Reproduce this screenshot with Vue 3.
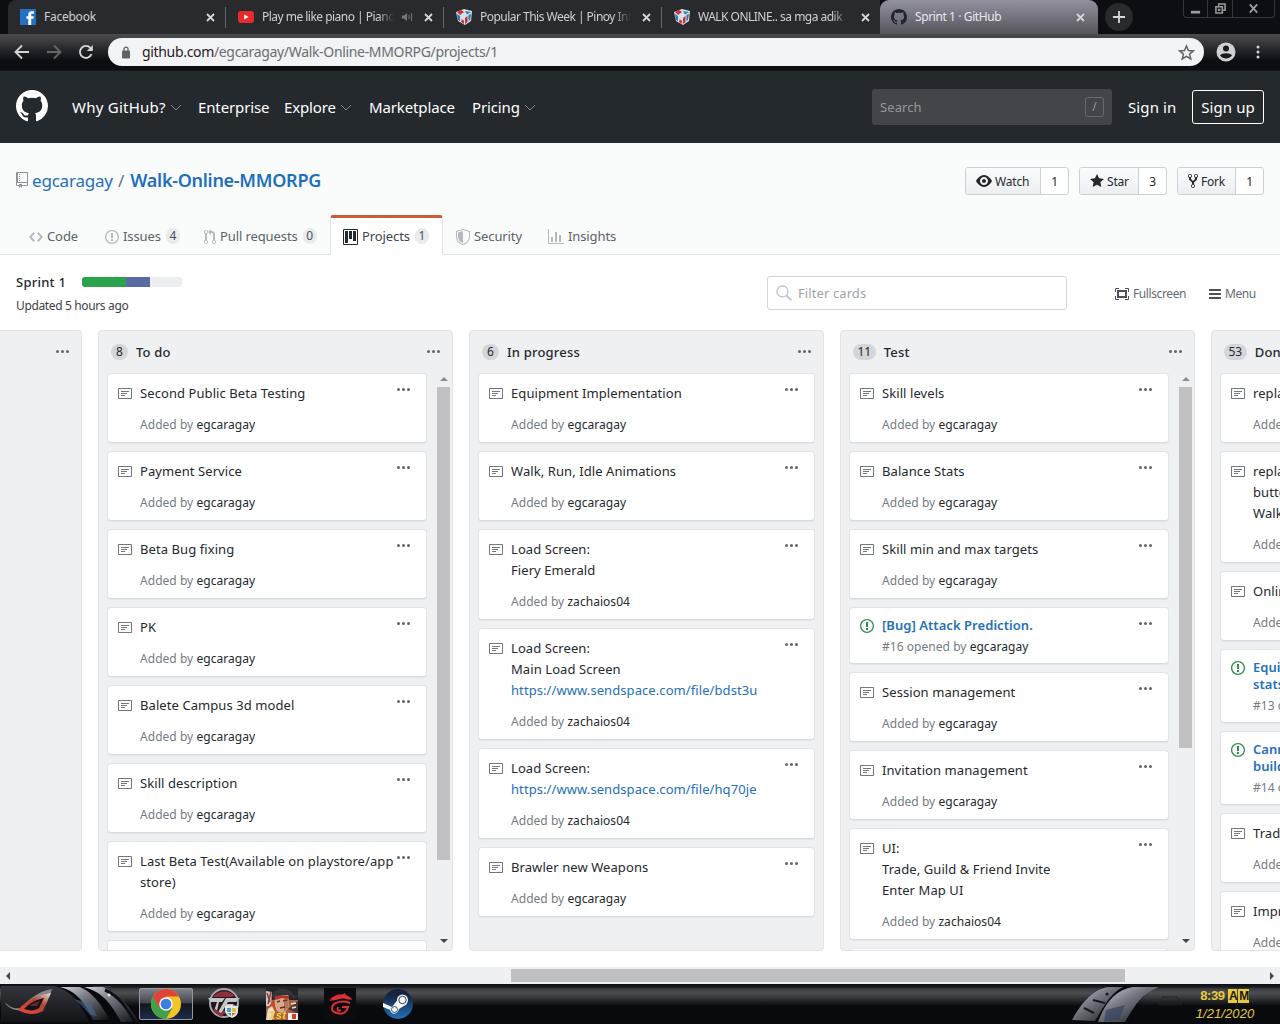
<script setup>
const icons = {
  github: [16, 'M8 0C3.58 0 0 3.58 0 8c0 3.54 2.29 6.53 5.47 7.59.4.07.55-.17.55-.38 0-.19-.01-.82-.01-1.49-2.01.37-2.53-.49-2.69-.94-.09-.23-.48-.94-.82-1.13-.28-.15-.68-.52-.01-.53.63-.01 1.08.58 1.23.82.72 1.21 1.87.87 2.33.66.07-.52.28-.87.51-1.07-1.78-.2-3.64-.89-3.64-3.95 0-.87.31-1.59.82-2.15-.08-.2-.36-1.02.08-2.12 0 0 .67-.21 2.2.82.64-.18 1.32-.27 2-.27.68 0 1.36.09 2 .27 1.53-1.04 2.2-.82 2.2-.82.44 1.1.16 1.92.08 2.12.51.56.82 1.27.82 2.15 0 3.07-1.87 3.75-3.65 3.95.29.25.54.73.54 1.48 0 1.07-.01 1.93-.01 2.2 0 .21.15.46.55.38A8.013 8.013 0 0 0 16 8c0-4.42-3.58-8-8-8z'],
  repo: [12, 'M4 9H3V8h1v1zm0-3H3v1h1V6zm0-2H3v1h1V4zm0-2H3v1h1V2zm8-1v12c0 .55-.45 1-1 1H6v2l-1.5-1.5L3 16v-2H1c-.55 0-1-.45-1-1V1c0-.55.45-1 1-1h10c.55 0 1 .45 1 1zm-1 10H1v2h2v-1h3v1h5v-2zm0-10H2v9h9V1z'],
  code: [14, 'M9.5 3L8 4.5 11.5 8 8 11.5 9.5 13 14 8 9.5 3zm-5 0L0 8l4.5 5L6 11.5 2.5 8 6 4.5 4.5 3z'],
  issue: [14, 'M7 2.3c3.14 0 5.7 2.56 5.7 5.7s-2.56 5.7-5.7 5.7A5.71 5.71 0 0 1 1.3 8c0-3.14 2.56-5.7 5.7-5.7zM7 1C3.14 1 0 4.14 0 8s3.14 7 7 7 7-3.14 7-7-3.14-7-7-7zm1 3H6v5h2V4zm0 6H6v2h2v-2z'],
  pull: [12, 'M11 11.28V5c-.03-.78-.34-1.47-.94-2.06C9.46 2.35 8.78 2.03 8 2H7V0L4 3l3 3V4h1c.27.02.48.11.69.31.21.2.3.42.31.69v6.28A1.993 1.993 0 0 0 10 15a1.993 1.993 0 0 0 1-3.72zm-1 2.92c-.66 0-1.2-.55-1.2-1.2 0-.65.55-1.2 1.2-1.2.65 0 1.2.55 1.2 1.2 0 .65-.55 1.2-1.2 1.2zM4 3c0-1.11-.89-2-2-2a1.993 1.993 0 0 0-1 3.72v6.56A1.993 1.993 0 0 0 2 15a1.993 1.993 0 0 0 1-3.72V4.72c.59-.34 1-.98 1-1.72zm-.8 10c0 .66-.55 1.2-1.2 1.2-.65 0-1.2-.55-1.2-1.2 0-.65.55-1.2 1.2-1.2.65 0 1.2.55 1.2 1.2zM2 4.2C1.34 4.2.8 3.65.8 3c0-.65.55-1.2 1.2-1.2.65 0 1.2.55 1.2 1.2 0 .65-.55 1.2-1.2 1.2z'],
  project: [15, 'M10 12h3V2h-3v10zm-4-2h3V2H6v8zm-4 4h3V2H2v12zm-1 1h13V1H1v14zM14 0H1a1 1 0 0 0-1 1v14a1 1 0 0 0 1 1h13a1 1 0 0 0 1-1V1a1 1 0 0 0-1-1z'],
  shield: [14, 'M0 2l7-2 7 2v6.02C14 12.69 8.69 16 7 16c-1.69 0-7-3.31-7-7.98V2zm1 .75L7 1l6 1.75v5.268C13 12.104 8.449 15 7 15c-1.449 0-6-2.896-6-6.982V2.75zm1 .75L7 2v12c-1.207 0-5-2.482-5-5.985V3.5z'],
  graph: [16, 'M16 14v1H0V0h1v14h15zM5 13H3V8h2v5zm4 0H7V3h2v10zm4 0h-2V6h2v7z'],
  eye: [16, 'M8.06 2C3 2 0 8 0 8s3 6 8.06 6C13 14 16 8 16 8s-3-6-7.94-6zM8 12c-2.2 0-4-1.78-4-4 0-2.2 1.8-4 4-4 2.22 0 4 1.8 4 4 0 2.22-1.78 4-4 4zm2-4c0 1.11-.89 2-2 2-1.11 0-2-.89-2-2 0-1.11.89-2 2-2 1.11 0 2 .89 2 2z'],
  star: [14, 'M14 6l-4.9-.64L7 1 4.9 5.36 0 6l3.6 3.26L2.67 14 7 11.67 11.33 14l-.93-4.74L14 6z'],
  fork: [10, 'M8 1a1.993 1.993 0 0 0-1 3.72V6L5 8 3 6V4.72A1.993 1.993 0 0 0 2 1a1.993 1.993 0 0 0-1 3.72V6.5l3 3v1.78A1.993 1.993 0 0 0 5 15a1.993 1.993 0 0 0 1-3.72V9.5l3-3V4.72A1.993 1.993 0 0 0 8 1zM2 4.2C1.34 4.2.8 3.65.8 3c0-.65.55-1.2 1.2-1.2.65 0 1.2.55 1.2 1.2 0 .65-.55 1.2-1.2 1.2zm3 10c-.66 0-1.2-.55-1.2-1.2 0-.65.55-1.2 1.2-1.2.65 0 1.2.55 1.2 1.2 0 .65-.55 1.2-1.2 1.2zm3-10c-.66 0-1.2-.55-1.2-1.2 0-.65.55-1.2 1.2-1.2.65 0 1.2.55 1.2 1.2 0 .65-.55 1.2-1.2 1.2z'],
  note: [14, 'M3 10h4V9H3v1zm0-2h6V7H3v1zm0-2h8V5H3v1zm10 6H1V3h12v9zM1 2c-.55 0-1 .45-1 1v9c0 .55.45 1 1 1h12c.55 0 1-.45 1-1V3c0-.55-.45-1-1-1H1z'],
  kebab: [13, 'M1.5 9a1.5 1.5 0 1 0 0-3 1.5 1.5 0 0 0 0 3zm5 0a1.5 1.5 0 1 0 0-3 1.5 1.5 0 0 0 0 3zM13 7.5a1.5 1.5 0 1 1-3 0 1.5 1.5 0 0 1 3 0z'],
  full: [14, 'M13 10h1v3c0 .547-.453 1-1 1h-3v-1h3v-3zM1 10H0v3c0 .547.453 1 1 1h3v-1H1v-3zm0-7h3V2H1c-.547 0-1 .453-1 1v3h1V3zm1 1h10v8H2V4zm2 6h6V6H4v4zm6-8v1h3v3h1V3c0-.547-.453-1-1-1h-3z'],
  bars: [12, 'M11.41 9H.59C0 9 0 8.59 0 8c0-.59 0-1 .59-1H11.4c.59 0 .59.41.59 1 0 .59 0 1-.59 1h.01zm0-4H.59C0 5 0 4.59 0 4c0-.59 0-1 .59-1H11.4c.59 0 .59.41.59 1 0 .59 0 1-.59 1h.01zM.59 11H11.4c.59 0 .59.41.59 1 0 .59 0 1-.59 1H.59C0 13 0 12.59 0 12c0-.59 0-1 .59-1z'],
}

const browserTabs = [
  { icon: 'fb', title: 'Facebook' },
  { icon: 'yt', title: 'Play me like piano | Piano', sound: true },
  { icon: 'cube', title: 'Popular This Week | Pinoy Inte' },
  { icon: 'cube', title: 'WALK ONLINE.. sa mga adik' },
  { icon: 'gh', title: 'Sprint 1 · GitHub', active: true },
]

const nav = [
  { label: 'Why GitHub?', caret: true, w: 126, wide: true },
  { label: 'Enterprise', w: 86 },
  { label: 'Explore', caret: true, w: 85 },
  { label: 'Marketplace', w: 103 },
  { label: 'Pricing', caret: true, w: 80 },
]

const repoTabs = [
  { icon: 'code', label: 'Code', w: 76 },
  { icon: 'issue', label: 'Issues', count: 4, w: 99 },
  { icon: 'pull', label: 'Pull requests', count: 0, w: 139 },
  { icon: 'project', label: 'Projects', count: 1, w: 113, active: true },
  { icon: 'shield', label: 'Security', w: 92 },
  { icon: 'graph', label: 'Insights', w: 90 },
]

const actions = [
  { icon: 'eye', label: 'Watch', count: 1, w: 75, total: 104 },
  { icon: 'star', label: 'Star', count: 3, w: 59, total: 88 },
  { icon: 'fork', label: 'Fork', count: 1, w: 58, total: 87 },
]

const note = (lines, by = 'egcaragay') => ({ lines: [].concat(lines), by })
const issue = (lines, num) => ({ lines, num, by: 'egcaragay' })

const columns = [
  { name: '', cards: [] },
  {
    name: 'To do', count: 8, thumb: 473,
    cards: [
      note('Second Public Beta Testing'), note('Payment Service'), note('Beta Bug fixing'), note('PK'),
      note('Balete Campus 3d model'), note('Skill description'),
      note(['Last Beta Test(Available on playstore/app', 'store)']), note('Website'),
    ],
  },
  {
    name: 'In progress', count: 6,
    cards: [
      note('Equipment Implementation'), note('Walk, Run, Idle Animations'),
      note(['Load Screen:', 'Fiery Emerald'], 'zachaios04'),
      note(['Load Screen:', 'Main Load Screen', 'https://www.sendspace.com/file/bdst3u'], 'zachaios04'),
      note(['Load Screen:', 'https://www.sendspace.com/file/hq70je'], 'zachaios04'),
      note('Brawler new Weapons'),
    ],
  },
  {
    name: 'Test', count: 11, thumb: 361,
    cards: [
      note('Skill levels'), note('Balance Stats'), note('Skill min and max targets'),
      issue(['[Bug] Attack Prediction.'], 16), note('Session management'), note('Invitation management'),
      note(['UI:', 'Trade, Guild & Friend Invite', 'Enter Map UI'], 'zachaios04'), note('Map'),
    ],
  },
  {
    name: 'Done', count: 53, thumb: 100,
    cards: [
      note('replace skill icons'), note(['replace login', 'button images', 'Walk Online']), note('Online status'),
      issue(['Equipment bonus', 'stats not applied'], 13), issue(['Cannot enter the', 'building'], 14),
      note('Trade system'), note('Improve lighting'),
    ],
  },
]
</script>

<template>
  <div class="screen">
    <div class="tabstrip">
      <div v-for="(t, i) in browserTabs" :key="i" class="btab" :class="{ active: t.active }">
        <svg v-if="t.icon === 'fb'" class="fav" viewBox="0 0 16 16"><rect width="16" height="16" fill="#2470c4" /><path d="M8.3 16V9.8H6.4V7.3h1.9V5.5C8.3 3.400 9.500 2.300 11.500 2.300H14v2.400h-1.500c-1 0-1.300.4-1.300 1.200v1.400h2.600l-.4 2.500h-2.200V16z" fill="#fff" /></svg>
        <svg v-else-if="t.icon === 'yt'" class="fav" viewBox="0 0 16 16"><rect x="0" y="2" width="16" height="12" rx="3" fill="#e62b2b" /><path d="M6.200 5.500v5L10.600 8z" fill="#fff" /></svg>
        <svg v-else-if="t.icon === 'cube'" class="fav" viewBox="0 0 16 16">
          <path d="M0 3L8 0l8 2-1 10-6 4-7-4z" fill="#d8dfe6" /><path d="M1 3l4-2 3 2-4 3z" fill="#c8362e" /><path d="M9 2l6 1-4 2.500z" fill="#2a7fc4" />
          <path d="M1 5l3 2v5l-2-1z" fill="#2874b8" /><path d="M5 8l3 1.500V15l-3-2z" fill="#d3d9df" /><path d="M5.500 10.500l2.500 1V15l-3-2z" fill="#c33d34" /><path d="M9 9l2.500-2v6L9 15z" fill="#b93632" /><path d="M12.500 6L15 5l-1 6-1.500 1z" fill="#2d6fa9" />
        </svg>
        <svg v-else class="fav" viewBox="0 0 16 16" fill="#1e2430"><path :d="icons.github[1]" /></svg>
        <span class="btitle" :class="{ fade: t.title.length > 20 }">{{ t.title }}</span>
        <svg v-if="t.sound" class="sound" viewBox="0 0 11 10" fill="none" stroke="#77777b"><path d="M0 3.500h2L5 1v8L2 6.500H0z" fill="#77777b" stroke="none" /><path d="M7 3v4M9.500 1v8" /></svg>
        <svg class="close" viewBox="0 0 9 9"><path d="M1 1l7 7M8 1L1 8" stroke="#d6d6da" stroke-width="1.800" /></svg>
      </div>
      <div class="newtab"><svg viewBox="0 0 12 12"><path d="M6 0v12M0 6h12" stroke="#d8d8dc" stroke-width="1.800" /></svg></div>
      <div class="winbtns">
        <span><svg viewBox="0 0 12 12"><path d="M1 10h10" stroke="#9b9ba0" stroke-width="3" /></svg></span>
        <span><svg viewBox="0 0 12 12" fill="none" stroke="#9b9ba0" stroke-width="1.700"><path d="M4 3V1h7v7H9M1 4h7v7H1zM4 7h1v1H4z" /></svg></span>
        <span class="wide"><svg viewBox="0 0 12 12"><path d="M2 1.500l8 9M10 1.500l-8 9" stroke="#9b9ba0" stroke-width="2" /></svg></span>
      </div>
    </div>

    <div class="toolbar">
      <svg class="navi" viewBox="0 0 16 16" fill="none" stroke="#d4d5d8" stroke-width="1.800"><path d="M15 8H2M8 1.500L1.500 8 8 14.500" /></svg>
      <svg class="navi" viewBox="0 0 16 16" fill="none" stroke="#66676a" stroke-width="1.800"><path d="M1 8h13M8 1.500L14.500 8 8 14.500" /></svg>
      <svg class="navi" viewBox="0 0 16 16" fill="none" stroke="#d4d5d8" stroke-width="1.900"><path d="M13.500 10.200A6 6 0 1 1 12.500 4L14 5.500" /><path d="M14.800 1v6h-6z" fill="#d4d5d8" stroke="none" /></svg>
      <div class="omni">
        <svg class="lock" viewBox="0 0 10 13"><rect x="1" y="4.500" width="8" height="8" rx="1" fill="#5f6368" /><path d="M3 5V3.200a2 2 0 0 1 4 0V5" fill="none" stroke="#5f6368" stroke-width="1.300" /></svg>
        <span class="url"><b>github.com</b>/egcaragay/Walk-Online-MMORPG/projects/1</span>
        <svg class="bstar" viewBox="0 0 16 16"><path d="M8 1.800l1.800 4.300 4.700.4-3.600 3 1.100 4.600L8 11.600l-4 2.500 1.100-4.600-3.600-3 4.700-.4z" fill="none" stroke="#5f6368" stroke-width="1.400" /></svg>
      </div>
      <svg class="user" viewBox="0 0 20 20"><circle cx="10" cy="10" r="9.500" fill="#d0d0d4" /><circle cx="10" cy="6.500" r="3" fill="#191b20" /><path d="M4 13.500c1.500-3 10.500-3 12 0-3 4-9 4-12 0z" fill="#191b20" /></svg>
      <svg class="dots" viewBox="0 0 4 14" fill="#d4d5d8"><circle cx="2" cy="2" r="1.500" /><circle cx="2" cy="7" r="1.500" /><circle cx="2" cy="12" r="1.500" /></svg>
    </div>

    <header class="ghead">
      <svg class="mark" viewBox="0 0 16 16" fill="#fff"><path :d="icons.github[1]" /></svg>
      <nav class="gnav">
        <a v-for="n in nav" :key="n.label" :class="{ loose: n.wide }" :style="{ width: n.w + 'px' }">{{ n.label }}<svg v-if="n.caret" viewBox="0 0 12 7"><path d="M1 1l5 5 5-5" fill="none" stroke="#84898d" /></svg></a>
      </nav>
      <div class="gsearch"><span>Search</span><kbd>/</kbd></div>
      <a class="signin">Sign in</a>
      <a class="signup">Sign up</a>
    </header>

    <section class="repohead">
      <div class="titlebar">
        <svg class="repoicon" viewBox="0 0 12 16"><path :d="icons.repo[1]" /></svg>
        <h1><a class="owner">egcaragay</a><i>/</i><a class="reponame">Walk-Online-MMORPG</a></h1>
        <div class="actions">
          <div v-for="a in actions" :key="a.label" class="action" :style="{ width: a.total + 'px' }">
            <span class="btn" :style="{ width: a.w + 'px' }"><svg :width="icons[a.icon][0]" height="16" :viewBox="`0 0 ${icons[a.icon][0]} 16`"><path :d="icons[a.icon][1]" /></svg>{{ a.label }}</span>
            <span class="cnt">{{ a.count }}</span>
          </div>
        </div>
      </div>
      <nav class="rtabs">
        <a v-for="r in repoTabs" :key="r.label" :class="{ active: r.active }" :style="{ width: r.w + 'px' }">
          <svg :width="icons[r.icon][0]" height="16" :viewBox="`0 0 ${icons[r.icon][0]} 16`"><path fill-rule="evenodd" :d="icons[r.icon][1]" /></svg>
          <span>{{ r.label }}</span><em v-if="r.count !== undefined">{{ r.count }}</em>
        </a>
      </nav>
    </section>

    <section class="projhead">
      <div class="pinfo">
        <div class="pname"><strong>Sprint 1</strong><span class="progress"><i class="g" /><i class="p" /></span></div>
        <div class="updated">Updated 5 hours ago</div>
      </div>
      <div class="filter"><svg viewBox="0 0 16 16" fill="none" stroke="#c2c5c9" stroke-width="1.300"><circle cx="6.500" cy="6.500" r="5.500" /><path d="M10.500 10.500l5 5" stroke-width="1.800" /></svg>Filter cards</div>
      <a class="plink full"><svg width="14" height="16" viewBox="0 0 14 16"><path fill-rule="evenodd" :d="icons.full[1]" /></svg>Fullscreen</a>
      <a class="plink"><svg width="12" height="16" viewBox="0 0 12 16"><path :d="icons.bars[1]" /></svg>Menu</a>
    </section>

    <main class="board">
      <div v-for="(c, i) in columns" :key="i" class="column">
        <div class="chead">
          <em v-if="c.count">{{ c.count }}</em><h4>{{ c.name }}</h4>
          <svg class="kebab" viewBox="0 0 13 16"><path :d="icons.kebab[1]" /></svg>
        </div>
        <div class="cbody">
          <div class="cards" :class="{ roomy: !c.thumb }">
            <article v-for="(k, j) in c.cards" :key="j" class="card" :class="{ issue: k.num }">
              <svg class="kind" viewBox="0 0 14 16"><path :d="k.num ? icons.issue[1] : icons.note[1]" /></svg>
              <div class="ktext">
                <div v-for="l in k.lines" :key="l" class="line" :class="{ link: l.startsWith('http') }">{{ l }}</div>
                <div class="meta">{{ k.num ? `#${k.num} opened by ` : 'Added by ' }}<b>{{ k.by }}</b></div>
              </div>
              <svg class="kebab" viewBox="0 0 13 16"><path :d="icons.kebab[1]" /></svg>
            </article>
          </div>
          <div v-if="c.thumb" class="vbar">
            <svg viewBox="0 0 8 4"><path d="M0 4l4-4 4 4z" fill="#8b8d90" /></svg>
            <i :style="{ height: c.thumb + 'px' }" />
            <svg class="down" viewBox="0 0 8 4"><path d="M0 0l4 4 4-4z" fill="#45484b" /></svg>
          </div>
        </div>
      </div>
    </main>

    <div class="hbar">
      <svg viewBox="0 0 4 8"><path d="M4 0L0 4l4 4z" fill="#45484b" /></svg>
      <i />
      <svg class="right" viewBox="0 0 4 8"><path d="M0 0l4 4-4 4z" fill="#45484b" /></svg>
    </div>

    <footer class="taskbar">
      <svg class="startart" viewBox="0 0 139 40">
        <defs>
          <linearGradient id="steel" x1="0" y1="0" x2="1" y2="1"><stop offset="0" stop-color="#d5d6dc" /><stop offset=".4" stop-color="#777a83" /><stop offset="1" stop-color="#0b0d12" /></linearGradient>
          <linearGradient id="rog" x1="0" y1="1" x2="1" y2="0"><stop offset="0" stop-color="#e84440" /><stop offset=".6" stop-color="#b34731" /><stop offset="1" stop-color="#e5e0dc" /></linearGradient>
          <linearGradient id="plate" x1="0" y1="0" x2="0" y2="1"><stop offset="0" stop-color="#35363b" /><stop offset="1" stop-color="#121317" /></linearGradient>
        </defs>
        <rect x="1" y="2" width="110" height="36" fill="url(#plate)" />
        <path d="M5 18c5 6 10 7 16 6 8-9 18-17 31-19l-2 6c-9 2-17 6-24 14-6 3-18 1-21-7z" fill="#85878d" />
        <path d="M18 26C26 16 38 11 51 9l-8 18c-7 4-16 4-25-1z" fill="url(#rog)" /><path d="M24 25c5-6 12-9 20-11l-5 10c-4 3-9 3-15 1z" fill="#151318" />
        <path d="M29 22c4-3 8-4 11-5l-3 5z" fill="#5d2a2c" />
        <path d="M54 2h38c17 6 31 22 47 36H90C80 20 72 6 54 2z" fill="#07090d" />
        <path d="M60 3h20c13 5 22 19 30 33H93C85 18 76 7 60 3z" fill="url(#steel)" />
        <path d="M84 3h19c16 7 25 18 36 35h-18C110 17 101 8 84 3z" fill="url(#steel)" />
        <path d="M74 15l17 5 6 12-7-1-8-9z" fill="#4f6690" opacity=".6" /><path d="M105 6c14 6 22 18 30 32" fill="none" stroke="#0d0f14" stroke-width="3" /><circle cx="109" cy="11" r="1.500" fill="#e5e6ea" />
      </svg>
      <div class="task chrome">
        <svg viewBox="0 0 30 30"><circle cx="15" cy="15" r="15" fill="#f2c428" /><path d="M15 15L2 7.500A15 15 0 0 0 15 30l6.500-11z" fill="#43a047" /><path d="M2 7.500A15 15 0 0 1 28 7.500H15L8.500 19z" fill="#df4437" /><circle cx="15" cy="15" r="6.800" fill="#f3f3f3" /><circle cx="15" cy="15" r="5.300" fill="#3b7de0" /></svg>
      </div>
      <svg class="app cf" viewBox="0 0 32 32">
        <circle cx="16" cy="15" r="14" fill="#201619" stroke="#a5a7ac" stroke-width="2" /><path d="M5 9C10 2 20 1 27 8l-4 1H8z" fill="#8e303b" /><path d="M0 10h17l-3 4h-3L9 23H6l3-9H3zM18 10h14l-4 4h-8l-1 2h7l-3 3h-6l-4 7h-4z" fill="#c3c5c9" /><path d="M6 22l7 5 4-4" stroke="#8e303b" stroke-width="3" fill="none" />
        <path d="M17 18l6-1 7 1v5c0 4-3 6-6 7-4-2-7-4-7-7z" fill="#e4e5e8" /><path d="M19 20h4v4h-4z" fill="#42a0d0" /><path d="M24 20h4v4h-4z" fill="#e5bd32" /><path d="M19 25h4v3z" fill="#55a85c" /><path d="M24 25h4l-4 3z" fill="#c96a3c" />
      </svg>
      <svg class="app ps" viewBox="0 0 32 32">
        <rect width="32" height="32" fill="#a5603f" /><path d="M0 0h32v12H0z" fill="#23242a" /><path d="M0 3l6 1-1 14H0z" fill="#d1cac4" /><path d="M1 5l3 9M5 4L2 16" stroke="#8e3a30" stroke-width="1.500" />
        <path d="M8 8c4-4 12-4 15 0v10c-3 9-11 9-14 1z" fill="#dba588" /><path d="M18 8c3 0 5 2 5 5l-1 7-4 4z" fill="#b87455" /><path d="M6 8C8-1 24-2 27 7l5 1-4 3-4-4-13 1-3 5z" fill="#363339" /><path d="M9 8l14 0v3l-7-1-7 2z" fill="#b83224" /><path d="M2 20l6-9 2 13z" fill="#c1492f" />
        <path d="M11 14l3-1M17 13l4-1M14 20l5-1" stroke="#563126" stroke-width="1.500" /><path d="M22 21l10-8v13z" fill="#4e3531" /><path d="M25 16l5-1M26 20l4-1" stroke="#e8dfd8" stroke-width="1.500" /><path d="M2 21l4-3 3 6-3 8H0z" fill="#e9dccb" /><path d="M22 25h10v7H22z" fill="#eee" /><path d="M28 26v5" stroke="#d63b24" stroke-width="4" />
        <text x="3" y="31" font-size="11" font-weight="bold" font-style="italic" fill="#f2d035" font-family="Liberation Sans, sans-serif" textLength="17">1st</text>
      </svg>
      <svg class="app ga" viewBox="0 0 32 32"><rect width="32" height="32" fill="#0b0c10" /><path d="M4 12c3-1 5-4 9-5 3-1 6 0 8-2 0 2 2 2 6 5l1 2c-3-1-4 0-6-1-4-1-7 0-10 1l-7 1 3-2z" fill="#dd2f34" /><path d="M26 15c-5-2-12-2-16 1-3 3-3 8 3 9 6 2 10-1 11-6h-6M14 19c-1 3 0 5 3 3" fill="none" stroke="#dd2f34" stroke-width="2" /></svg>
      <svg class="app st" viewBox="0 0 32 32">
        <defs><linearGradient id="stm" x1="0" y1="0" x2="0" y2="1"><stop offset=".2" stop-color="#15233f" /><stop offset="1" stop-color="#2272b8" /></linearGradient></defs>
        <circle cx="16" cy="16" r="15" fill="url(#stm)" /><path d="M1 15l9 4 7-9 8 6-8 5c-1 6-8 6-9 1l-7-3z" fill="#f4f4f4" /><circle cx="20.500" cy="12" r="5.500" fill="#f4f4f4" /><circle cx="20.500" cy="12" r="3.700" fill="none" stroke="#34435c" stroke-width="1" /><circle cx="12.500" cy="21.500" r="3" fill="none" stroke="#34557d" stroke-width="1" />
      </svg>
      <svg class="trayart" viewBox="0 0 120 40">
        <path d="M0 38C8 22 20 5 38 2h50C74 7 66 20 57 38z" fill="#090b10" /><path d="M1 36C11 18 23 4 38 3h14C38 10 31 26 24 37z" fill="url(#steel)" /><path d="M27 38C34 18 46 5 62 3h26C70 10 62 24 54 38z" fill="url(#steel)" /><path d="M35 26l19-5-6 15-15 2z" fill="#34415e" opacity=".7" /><path d="M22 16l12 3M13 24l10 5" stroke="#14181f" stroke-width="2" /><circle cx="36" cy="10" r="1.500" fill="#16181d" />
        <path d="M92 13h14l5 7H88z" fill="none" stroke="#222428" />
      </svg>
      <div class="clock"><div>8:39 <span>A</span><span>M</span></div><div class="date">1/21/2020</div></div>
    </footer>
  </div>
</template>

<style>
body { margin: 0; overflow: hidden; }
</style>

<style scoped>
.screen { width: 1280px; height: 1024px; overflow: hidden; display: flex; flex-direction: column; background: #fff; font-family: "Noto Sans", "Open Sans", sans-serif; font-size: 13px; color: #24292e; white-space: nowrap; }
.screen * { box-sizing: border-box; }
svg { flex: none; display: block; }
em, i { font-style: normal; }

.tabstrip { height: 34px; flex: none; display: flex; background: #0d0e13; padding-left: 8px; }
.btab { width: 218px; height: 34px; flex: none; display: flex; align-items: center; padding: 0 10px 0 12px; background: #292a2e; border-right: 1px solid #5c5d61; border-image: linear-gradient(#292a2e 8px, #66676b 8px, #66676b 27px, #292a2e 27px) 1; border-width: 0 1px 0 0; color: #cfcfd4; }
.btab:first-child { border-radius: 8px 0 0 0; }
.btab:nth-child(4) { border-right: 0; }
.btab.active { background: linear-gradient(#93919e, #7b7985 40%, #55555a); border: 0; border-radius: 9px 9px 0 0; padding: 0 13px 0 11px; color: #e8e8ee; }
.fav { width: 16px; height: 16px; margin-right: 8px; }
.btitle { flex: 1; overflow: hidden; font-size: 12px; letter-spacing: -.4px; line-height: 20px; margin-right: 11px; }
.btitle.fade { letter-spacing: -.52px; -webkit-mask-image: linear-gradient(90deg, #000 88%, transparent); mask-image: linear-gradient(90deg, #000 88%, transparent); }
.btab:first-child .btitle { letter-spacing: -.25px; }
.sound { width: 11px; height: 10px; margin: 0 11px 0 -3px; }
.close { width: 9px; height: 9px; }
.newtab { width: 28px; height: 28px; margin: 3px 0 0 7px; border-radius: 50%; background: #292a2e; display: flex; align-items: center; justify-content: center; }
.newtab svg { width: 12px; height: 12px; }
.winbtns { margin-left: 51px; height: 18px; display: flex; border: 1px solid #35363a; border-top: 0; border-radius: 0 0 4px 4px; }
.winbtns span { width: 25px; display: flex; align-items: center; justify-content: center; border-right: 1px solid #35363a; }
.winbtns span:first-child { width: 24px; }
.winbtns .wide { width: 41px; border: 0; }
.winbtns svg { width: 11px; height: 11px; }
.newtab + .winbtns { margin-left: 50px; }

.toolbar { height: 36px; flex: none; display: flex; align-items: center; padding-left: 14px; background: linear-gradient(#4b4b4e, #414145 14%, #24252a 45%, #0b0d12 75%, #0c0e13); }
.navi { width: 16px; height: 16px; margin-right: 16px; }
.omni { width: 1096px; height: 28px; margin-left: -2px; border-radius: 14px; background: #f2f3f5; display: flex; align-items: center; padding: 0 9px 0 13px; }
.lock { width: 10px; height: 13px; margin-right: 11px; }
.url { flex: 1; font-size: 14px; letter-spacing: -.33px; line-height: 20px; color: #6a6e72; }
.url b { font-weight: 400; color: #1f2124; }
.bstar { width: 17px; height: 17px; }
.user { width: 20px; height: 20px; margin-left: 12px; }
.dots { width: 4px; height: 14px; margin-left: 20px; }

.ghead { height: 73px; flex: none; display: flex; align-items: center; background: #24292e; color: #fff; padding-left: 16px; border-top: 1px solid #15181d; }
.mark { width: 32px; height: 32px; margin-top: -2px; }
.gnav { display: flex; margin-left: 24px; }
.gnav a { display: flex; align-items: center; font-size: 15px; letter-spacing: -.13px; line-height: 22px; }
.gnav .loose { letter-spacing: .25px; }
.gnav svg { width: 12px; height: 7px; margin-left: 4px; }
.gsearch { width: 240px; height: 36px; margin-left: 320px; border-radius: 3px; background: #42464a; display: flex; align-items: center; justify-content: space-between; padding: 0 8px; color: #94989c; font-size: 13px; letter-spacing: .1px; }
kbd { width: 19px; height: 20px; border: 1px solid #666a6e; border-radius: 3px; font: 12px/17px "Noto Sans", sans-serif; text-align: center; }
.signin { margin-left: 16px; width: 64px; font-size: 15px; letter-spacing: .1px; }
.signup { width: 72px; height: 34px; border: 1px solid #fff; border-radius: 3px; font-size: 15px; line-height: 32px; text-align: center; letter-spacing: .1px; }

.repohead { height: 112px; flex: none; background: #fafbfb; border-bottom: 1px solid #e1e4e8; }
.titlebar { height: 72px; display: flex; padding: 24px 16px 0; }
.repoicon { width: 12px; height: 16px; margin-top: 5px; fill: #8f9499; }
h1 { margin: 0 0 0 4px; font-size: 17px; font-weight: 400; line-height: 27px; color: #6a737d; display: flex; }
h1 i { margin: 0 5px 0 4px; }
.owner, .reponame { color: #1f6fbd; }
.owner { width: 82px; letter-spacing: -.2px; }
.reponame { font-weight: 600; letter-spacing: -.28px; font-size: 18px; margin-left: 1px; }
.actions { margin-left: auto; display: flex; gap: 10px; }
.action { display: flex; height: 28px; border: 1px solid #cdd0d3; border-radius: 3px; overflow: hidden; background: #fff; font-size: 12px; line-height: 27px; letter-spacing: -.2px; color: #24292e; }
.btn { display: flex; align-items: center; gap: 3px; padding-left: 10px; background: linear-gradient(#fafbfc, #eceff2); border-right: 1px solid #cdd0d3; fill: #24292e; }
.cnt { flex: 1; text-align: center; }
.rtabs { display: flex; height: 40px; padding-left: 16px; }
.rtabs a { height: 40px; flex: none; display: flex; align-items: center; padding: 3px 0 0 13px; border-top: 0; color: #5b636b; letter-spacing: -.1px; }
.rtabs span { margin-top: -2px; }
.rtabs svg { fill: #b5b9bd; margin-right: 4px; }
.rtabs em { min-width: 14px; height: 16px; border-radius: 8px; background: #e9ebee; margin: -1px 0 0 5px; font-size: 12px; line-height: 16px; text-align: center; color: #4a5057; }
.rtabs a.active { background: #fff; border: 1px solid #e1e4e8; border-top: 3px solid #c85d38; border-bottom: 0; border-radius: 3px 3px 0 0; padding: 0 0 0 12px; color: #40464c; }
.rtabs a.active svg { fill: #24292e; }

.projhead { height: 75px; flex: none; display: flex; align-items: flex-start; padding-left: 16px; }
.pinfo { width: 751px; padding-top: 17px; }
.pname { display: flex; align-items: center; height: 20px; }
.pname strong { width: 66px; font-size: 13px; font-weight: 500; letter-spacing: .25px; }
.progress { width: 100px; height: 10px; border-radius: 3px; overflow: hidden; background: #eceeef; display: flex; }
.progress .g { width: 44px; background: #2ba24c; }
.progress .p { width: 24px; background: #596ba0; }
.updated { margin-top: 5px; font-size: 12px; line-height: 18px; letter-spacing: -.36px; color: #3d4248; }
.filter { width: 300px; height: 34px; margin-top: 21px; border: 1px solid #d1d5da; border-radius: 3px; display: flex; align-items: center; padding-left: 8px; color: #a0a5aa; letter-spacing: .1px; }
.filter svg { width: 16px; height: 16px; margin-right: 6px; }
.plink { display: flex; align-items: center; gap: 4px; margin-top: 29px; height: 19px; font-size: 12px; letter-spacing: -.4px; color: #656b71; fill: #4c5157; }
.plink.full { width: 94px; margin-left: 48px; }

.board { height: 621px; flex: none; display: flex; gap: 16px; margin-left: -273px; width: 1900px; }
.column { width: 355px; flex: none; height: 621px; background: #eff0f2; border: 1px solid #e1e3e6; border-radius: 4px; overflow: hidden; }
.chead { height: 42px; display: flex; align-items: center; padding: 0 12px; }
.chead em { min-width: 17px; height: 16px; padding: 0 4.500px; border-radius: 8px; background: #d5d6da; font-size: 12px; line-height: 16px; text-align: center; }
.chead h4 { margin: 0 auto 0 8px; font-size: 13px; font-weight: 500; letter-spacing: .2px; }
.kebab { width: 13px; height: 16px; fill: #60656b; }
.cbody { display: flex; height: 577px; }
.cards { width: 320px; flex: none; margin-left: 8px; display: flex; flex-direction: column; gap: 8px; overflow: hidden; }
.cards.roomy { width: 337px; }
.card { flex: none; display: flex; align-items: flex-start; background: #fff; border: 1px solid #e1e4e8; border-bottom-color: #d8dbdf; border-radius: 4px; padding: 9px 16px 7px 10px; box-shadow: 0 1px 1px rgba(27, 31, 35, .05); }
.kind { width: 14px; height: 16px; margin: 3px 8px 0 0; fill: #73787d; }
.ktext { flex: 1; }
.line { font-size: 13px; line-height: 21px; letter-spacing: .08px; }
.line.link { color: #2570b8; }
.meta { margin-top: 10px; height: 21px; font-size: 12px; line-height: 21px; letter-spacing: .04px; color: #757c83; }
.meta b { font-weight: 400; color: #24292e; }
.card .kebab { margin: -1px 0 0 -15px; }
.issue { padding: 9px 16px 7px 10px; }
.issue .kind { margin-top: 1px; fill: #2e8f4c; }
.issue .line { line-height: 17px; font-weight: 600; color: #2570b8; letter-spacing: .05px; }
.issue .meta { margin-top: 2px; height: 20px; }
.vbar { width: 13px; margin-left: 10px; padding-top: 4px; display: flex; flex-direction: column; align-items: center; }
.vbar svg { width: 8px; height: 4px; margin-bottom: 6px; }
.vbar i { width: 13px; background: #c0c0c2; }
.vbar .down { margin: auto 0 7px; }

.hbar { margin-top: 16px; height: 17px; flex: none; background: #eff0f1; display: flex; align-items: center; padding: 0 6px; }
.hbar svg { width: 4px; height: 8px; }
.hbar i { width: 614px; height: 13px; margin-left: 501px; background: #c0c0c2; }
.hbar .right { margin-left: auto; }

.taskbar { height: 40px; flex: none; display: flex; align-items: flex-start; background: linear-gradient(#0b0d11 0, #1b1c20 3px, #3c3d41 5px, #4c4d51 9px, #303135 15px, #17191d 19px, #090b0f 22px, #07090c); }
.startart { width: 139px; height: 40px; }
.task { width: 54px; height: 32px; margin-top: 4px; border: 1px solid #96989f; border-radius: 2px; background: linear-gradient(#80828b, #45474e 45%, #15171d 50%, #1b2c4b); display: flex; align-items: center; justify-content: center; }
.chrome svg { width: 30px; height: 30px; }
.app { width: 32px; height: 32px; margin-top: 4px; }
.cf { margin-left: 15px; }
.ps { margin-left: 26px; }
.ga { margin-left: 26px; }
.st { margin-left: 26px; }
.trayart { width: 120px; height: 40px; margin-left: 657px; }
.clock { width: 74px; margin-top: 3px; margin-left: -3px; text-align: center; font: 700 13px/18px "Liberation Sans Narrow", "Liberation Sans", sans-serif; letter-spacing: -.4px; color: #e9c93c; }
.clock span { background: #e9c93c; color: #17191d; font-size: 12px; padding: 0 0 0 1px; margin-right: 1px; }
.clock .date { font-weight: 400; font-style: italic; letter-spacing: .1px; }
</style>
